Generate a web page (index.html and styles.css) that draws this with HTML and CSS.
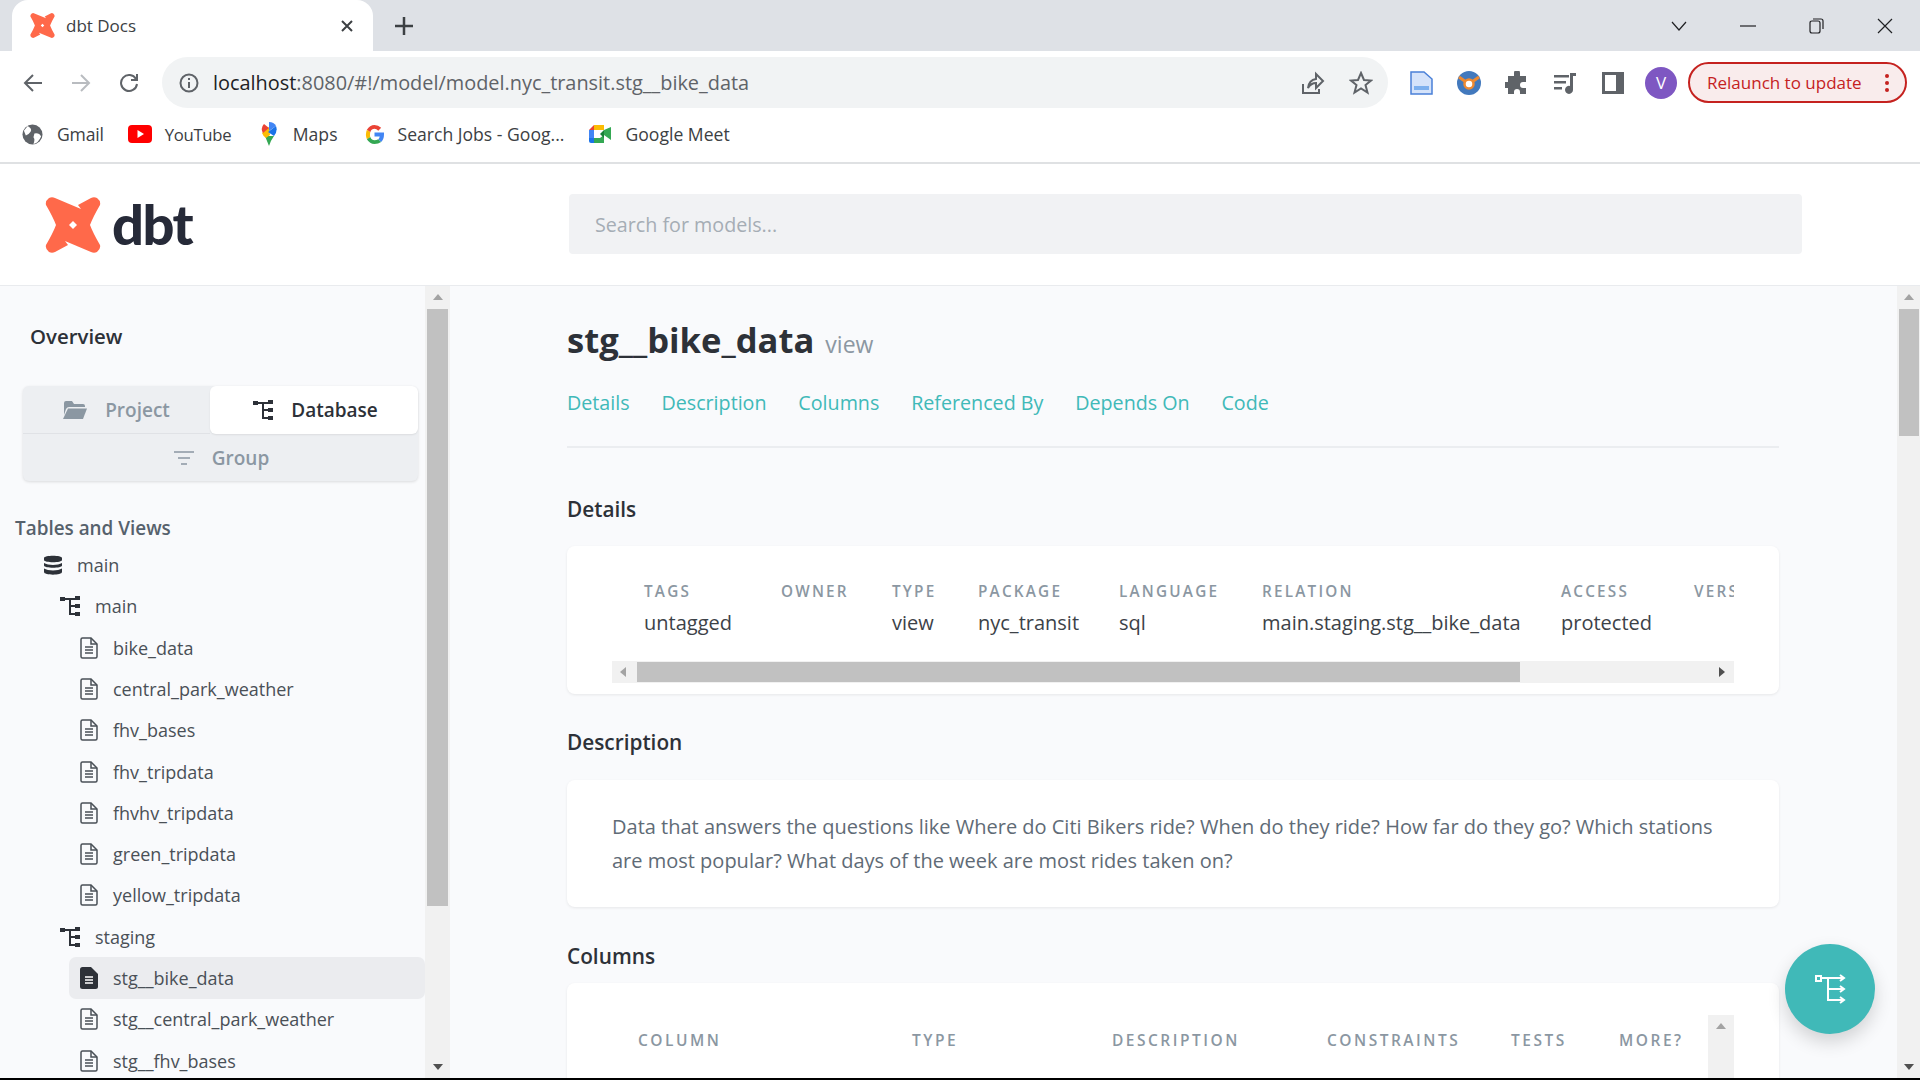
FILE: index.html
```html
<!DOCTYPE html>
<html lang="en">
<head>
    <meta charset="UTF-8">
    <title>dbt Docs</title>
    <link rel="stylesheet" href="styles.css">
</head>
<body>
    <svg class="defs" width="0" height="0">
        <symbol id="dbt-mark" viewBox="0 0 56 56">
            <path fill="#ff694a" fill-rule="evenodd" d="M4 1Q7-.5 10 1L36 12 33 8 46 1Q49-.5 52 1 56 4 55 8 48 20 45 28 48 36 55 48 56 52 52 55 49 56.500 46 55L20 44 23 48 10 55Q7 56.500 4 55 0 52 1 48 8 36 11 28 8 20 1 8 0 4 4 1ZM28 24L24 28 28 32 32 28Z"/>
        </symbol>
        <symbol id="file" viewBox="0 0 18 22">
            <path fill="none" stroke="currentColor" stroke-width="1.500" d="M1 2.500Q1 1 2.500 1H11L17 7V19.500Q17 21 15.500 21H2.500Q1 21 1 19.500Z"/>
            <path fill="none" stroke="currentColor" stroke-width="1.500" d="M11 1V7H17M5 10H13M5 13H13M5 16H13"/>
        </symbol>
        <symbol id="file-solid" viewBox="0 0 18 22">
            <path fill="currentColor" d="M0 2.500Q0 0 2.500 0H11L18 7V19.500Q18 22 15.500 22H2.500Q0 22 0 19.500Z"/>
            <path fill="none" stroke="#fff" stroke-width="1.500" d="M5 10H13M5 13H13M5 16H13"/>
        </symbol>
        <symbol id="tree" viewBox="0 0 20 20">
            <path fill="currentColor" d="M0 1H5V5H0ZM15 0H20V4H15ZM15 8H20V12H15ZM15 16H20V20H15Z"/>
            <path fill="none" stroke="currentColor" stroke-width="2" d="M5 3H15M10 3V18H15M10 10H15"/>
        </symbol>
    </svg>

    <div class="tabstrip">
        <div class="tab">
            <svg class="favicon"><use href="#dbt-mark"/></svg>
            <span class="tab-title">dbt Docs</span>
            <svg class="tab-close" viewBox="0 0 12 12"><path d="M1 1L11 11M11 1L1 11"/></svg>
        </div>
        <svg class="tab-new" viewBox="0 0 18 18"><path d="M9 0V18M0 9H18"/></svg>
        <div class="winctl">
            <svg class="win-chevron" viewBox="0 0 16 10"><path d="M1 1L8 9 15 1"/></svg>
            <svg class="win-min" viewBox="0 0 16 16"><path d="M0 8H16"/></svg>
            <svg viewBox="0 0 16 16"><path d="M1 5Q1 3 3 3H9Q11 3 11 5V13Q11 15 9 15H3Q1 15 1 13ZM4 1H12Q14 1 14 3V11"/></svg>
            <svg viewBox="0 0 16 16"><path d="M1 1L15 15M15 1L1 15"/></svg>
        </div>
    </div>

    <div class="toolbar">
        <div class="nav">
            <svg viewBox="0 0 20 20"><path d="M19 10H2M10 2L2 10 10 18"/></svg>
            <svg class="nav-off" viewBox="0 0 20 20"><path d="M1 10H18M10 2L18 10 10 18"/></svg>
            <svg viewBox="0 0 20 20"><path d="M17 6A8 8 0 1 0 18 11M18 1V7H12"/></svg>
        </div>
        <div class="omnibox">
            <svg class="info" viewBox="0 0 20 20"><circle cx="10" cy="10" r="8.500"/><path d="M10 9V15M10 5V7"/></svg>
            <span class="url"><b>localhost</b>:8080/#!/model/model.nyc_transit.stg__bike_data</span>
            <svg class="omni-ico" viewBox="0 0 24 24"><path d="M2 13V22H18V18M7 17Q8 9 15 8V3L22 10 15 17V12Q10 12 7 17Z"/></svg>
            <svg class="omni-ico" viewBox="0 0 24 24"><path d="M12 2L15 9 22 9.500 16.500 14 18.500 21.500 12 17.500 5.500 21.500 7.500 14 2 9.500 9 9Z"/></svg>
        </div>
        <div class="exts">
            <svg viewBox="0 0 24 24"><path fill="#d5e3fa" stroke="#4a80d8" stroke-width="1.500" d="M2 1H15L23 8V23H2Z"/><path fill="#7db0ee" d="M5 15H20V19H5Z"/></svg>
            <svg viewBox="0 0 24 24"><ellipse cx="12" cy="12" rx="12" ry="12" fill="#4279bd"/><path fill="none" stroke="#ee8a32" stroke-width="3" d="M2 6L9 11M22 6L15 11"/><circle cx="12" cy="13" r="4.500" fill="#fff" stroke="#ee8a32" stroke-width="2.500"/></svg>
            <svg viewBox="0 0 24 24"><path fill="#5f6368" d="M9 2A3 3 0 0 1 15 2V5H21V11H18A3 3 0 0 0 18 17H21V23H15V21A3 3 0 0 0 9 21V23H3V17H1A3 3 0 0 1 1 11H3V5H9Z"/></svg>
            <svg viewBox="0 0 24 24"><path fill="#5f6368" d="M1 4H16V6.500H1ZM1 10H13V12.500H1ZM1 16H9V18.500H1ZM17 2H23V5H20V18.500A4 4 0 1 1 17 15Z"/></svg>
            <svg viewBox="0 0 24 24"><path fill="#5f6368" fill-rule="evenodd" d="M1 1H23V23H1ZM4 4V20H15V4Z"/></svg>
            <span class="avatar">V</span>
        </div>
        <div class="relaunch">
            <span>Relaunch to update</span>
            <svg viewBox="0 0 4 18"><circle cx="2" cy="2" r="2"/><circle cx="2" cy="9" r="2"/><circle cx="2" cy="16" r="2"/></svg>
        </div>
    </div>

    <div class="bookmarks">
        <div class="bm bm-gmail">
            <svg viewBox="0 0 22 22"><circle cx="11" cy="11" r="10.500" fill="#5f6368"/><path fill="#fff" d="M6 2Q11 5 9 8T4 12L2 7ZM13 10Q18 9 20 13 17 20 12 21 14 16 12 14Z"/></svg>
            <span>Gmail</span>
        </div>
        <div class="bm bm-yt">
            <svg viewBox="0 0 24 18"><rect width="24" height="18" rx="4" fill="#f00"/><path fill="#fff" d="M9.500 5L16 9 9.500 13Z"/></svg>
            <span>YouTube</span>
        </div>
        <div class="bm bm-maps">
            <svg viewBox="0 0 16 24"><path fill="#34a853" d="M4 14L8 24Q10 18 13 14Z"/><path fill="#fbbc04" d="M1 11L8 5 9 13 5 16Q2 14 1 11Z"/><path fill="#4285f4" d="M8 0Q13 0 15 4L8 9Z"/><path fill="#ea4335" d="M3 2L8 6 2 11Q-1 6 3 2Z"/><path fill="#1a73e8" d="M15 4Q17 9 13 14L7 10Z"/></svg>
            <span>Maps</span>
        </div>
        <div class="bm bm-g">
            <svg viewBox="0 0 20 20"><path fill="#ea4335" d="M2 5Q5 0 10 0 14 0 17 3L14 6Q12 4 10 4 7 4 5.500 7.500Z"/><path fill="#fbbc04" d="M2 5L5.500 7.500Q5 10 5.500 12.500L2 15Q0 10 2 5Z"/><path fill="#34a853" d="M2 15L5.500 12.500Q7 16 10 16 12 16 14 15L17 18Q14 20 10 20 5 20 2 15Z"/><path fill="#4285f4" d="M20 10Q20 15 17 18L14 15Q15 14 15.500 12H10V8H20Z"/></svg>
            <span>Search Jobs - Goog...</span>
        </div>
        <div class="bm bm-meet">
            <svg viewBox="0 0 22 20"><path fill="#ea4335" d="M0 6L5 1V6Z"/><path fill="#fbbc04" d="M5 1H15V6H5Z"/><path fill="#4285f4" d="M0 6H5V14H0Z"/><path fill="#1a73e8" d="M0 14H5V19H2Q0 19 0 17Z"/><path fill="#34a853" d="M5 14H11L15 11V19H5ZM15 6V11L22 16V3Z"/><path fill="#188038" d="M11 10L15 6V14Z"/></svg>
            <span>Google Meet</span>
        </div>
    </div>

    <div class="app">
        <header class="app-head">
            <div class="brand">
                <svg class="brand-mark"><use href="#dbt-mark"/></svg>
                <span class="brand-name">dbt</span>
            </div>
            <div class="search">Search for models...</div>
        </header>

        <div class="app-body">
            <aside class="sidebar">
                <div class="side-title">Overview</div>
                <div class="switch">
                    <div class="switch-btn sw-project">
                        <svg class="sw-folder" viewBox="0 0 24 18"><path fill="#8b97a2" d="M1 2Q1 0 3 0H9L11 3H20Q22 3 22 5V6H6Q4 6 3 8L1 14Z"/><path fill="#8b97a2" d="M5 7.500H24L20 18H0Z"/></svg>
                        <span>Project</span>
                    </div>
                    <div class="switch-btn sw-database is-on">
                        <svg class="sw-tree"><use href="#tree"/></svg>
                        <span>Database</span>
                    </div>
                    <div class="switch-btn sw-group">
                        <svg class="sw-filter" viewBox="0 0 20 14"><path d="M0 1H20M4 7H16M7 13H13"/></svg>
                        <span>Group</span>
                    </div>
                </div>
                <div class="side-sub">Tables and Views</div>
                <div class="tree">
                    <div class="row row-db">
                        <svg class="ico-db" viewBox="0 0 18 20"><path fill="#2d3138" d="M0 3C0 0 18 0 18 3V5C18 8 0 8 0 5ZM0 8C4 10.500 14 10.500 18 8V10.500C18 13.500 0 13.500 0 10.500ZM0 13.500C4 16 14 16 18 13.500V17C18 20.500 0 20.500 0 17Z"/></svg>
                        <span>main</span>
                    </div>
                    <div class="row row-schema"><svg class="ico-tree"><use href="#tree"/></svg><span>main</span></div>
                    <div class="row row-file"><svg class="ico-file"><use href="#file"/></svg><span>bike_data</span></div>
                    <div class="row row-file"><svg class="ico-file"><use href="#file"/></svg><span>central_park_weather</span></div>
                    <div class="row row-file"><svg class="ico-file"><use href="#file"/></svg><span>fhv_bases</span></div>
                    <div class="row row-file"><svg class="ico-file"><use href="#file"/></svg><span>fhv_tripdata</span></div>
                    <div class="row row-file"><svg class="ico-file"><use href="#file"/></svg><span>fhvhv_tripdata</span></div>
                    <div class="row row-file"><svg class="ico-file"><use href="#file"/></svg><span>green_tripdata</span></div>
                    <div class="row row-file"><svg class="ico-file"><use href="#file"/></svg><span>yellow_tripdata</span></div>
                    <div class="row row-schema"><svg class="ico-tree"><use href="#tree"/></svg><span>staging</span></div>
                    <div class="row row-file is-active"><svg class="ico-file"><use href="#file-solid"/></svg><span>stg__bike_data</span></div>
                    <div class="row row-file"><svg class="ico-file"><use href="#file"/></svg><span>stg__central_park_weather</span></div>
                    <div class="row row-file"><svg class="ico-file"><use href="#file"/></svg><span>stg__fhv_bases</span></div>
                </div>
            </aside>
            <div class="vbar vbar-side">
                <i class="arr arr-up"></i>
                <div class="thumb thumb-side"></div>
                <i class="arr arr-down"></i>
            </div>

            <main class="main">
                <div class="title-row">
                    <h1>stg__bike_data</h1>
                    <small>view</small>
                </div>
                <nav class="links">
                    <a>Details</a>
                    <a>Description</a>
                    <a>Columns</a>
                    <a>Referenced By</a>
                    <a>Depends On</a>
                    <a>Code</a>
                </nav>

                <h2 class="h-details">Details</h2>
                <section class="card card-details">
                    <div class="details-clip">
                        <div class="details-grid">
                            <div class="lbl">TAGS</div>
                            <div class="lbl">OWNER</div>
                            <div class="lbl">TYPE</div>
                            <div class="lbl">PACKAGE</div>
                            <div class="lbl">LANGUAGE</div>
                            <div class="lbl">RELATION</div>
                            <div class="lbl">ACCESS</div>
                            <div class="lbl">VERSION</div>
                            <div class="val">untagged</div>
                            <div class="val"></div>
                            <div class="val">view</div>
                            <div class="val">nyc_transit</div>
                            <div class="val">sql</div>
                            <div class="val">main.staging.stg__bike_data</div>
                            <div class="val">protected</div>
                            <div class="val"></div>
                        </div>
                    </div>
                    <div class="hbar">
                        <i class="arr arr-left"></i>
                        <div class="thumb thumb-h"></div>
                        <i class="arr arr-right"></i>
                    </div>
                </section>

                <h2 class="h-desc">Description</h2>
                <section class="card card-desc">
                    <p>Data that answers the questions like Where do Citi Bikers ride? When do they ride? How far do they go? Which stations are most popular? What days of the week are most rides taken on?</p>
                </section>

                <h2 class="h-cols">Columns</h2>
                <section class="card card-cols">
                    <div class="cols-grid">
                        <div class="lbl lbl-cols">COLUMN</div>
                        <div class="lbl lbl-cols">TYPE</div>
                        <div class="lbl lbl-cols">DESCRIPTION</div>
                        <div class="lbl lbl-cols">CONSTRAINTS</div>
                        <div class="lbl lbl-cols">TESTS</div>
                        <div class="lbl lbl-cols">MORE?</div>
                    </div>
                    <div class="vbar vbar-cols"><i class="arr arr-up"></i></div>
                </section>
            </main>
            <div class="vbar vbar-main">
                <i class="arr arr-up"></i>
                <div class="thumb thumb-main"></div>
                <i class="arr arr-down"></i>
            </div>
        </div>

        <button class="fab">
            <svg viewBox="0 0 32 32"><path d="M2 3H7V8H2ZM7 5H29M14 5V27H29M14 16H29M26 2L30 5 26 8M26 13L30 16 26 19M26 24L30 27 26 30"/></svg>
        </button>
    </div>
    <div class="edge"></div>
</body>
</html>
```

FILE: styles.css
```css
* {
    box-sizing: border-box;
}
html, body {
    height: 100%;
}
body {
    margin: 0;
    display: flex;
    flex-direction: column;
    overflow: hidden;
    font-family: "Open Sans", "Noto Sans", sans-serif;
    color: #2d3138;
    background: #fff;
}
.defs {
    position: absolute;
}

/* browser chrome */
.tabstrip {
    flex: none;
    height: 51px;
    display: flex;
    align-items: center;
    background: #dee1e6;
}
.tab {
    width: 361px;
    height: 51px;
    margin-left: 12px;
    padding: 0 20px 0 18px;
    display: flex;
    align-items: center;
    background: #fff;
    border-radius: 16px 16px 0 0;
}
.favicon {
    width: 25px;
    height: 25px;
}
.tab-title {
    margin-left: 11px;
    flex: 1;
    font-size: 17px;
    color: #3c4043;
}
.tab-close {
    width: 12px;
    height: 12px;
    fill: none;
    stroke: #3c4043;
    stroke-width: 2;
}
.tab-new {
    width: 18px;
    height: 18px;
    margin-left: 22px;
    fill: none;
    stroke: #3c4043;
    stroke-width: 2.500;
}
.winctl {
    margin-left: auto;
    padding-right: 27px;
    display: flex;
    align-items: center;
    gap: 52px;
}
.winctl svg {
    width: 16px;
    height: 16px;
    fill: none;
    stroke: #202124;
    stroke-width: 1.200;
}
.winctl .win-chevron {
    margin-right: 1px;
}
.winctl .win-min {
    margin-right: 1px;
}
.toolbar {
    flex: none;
    height: 57px;
    padding: 6px 12px 0 0;
    display: flex;
    align-items: flex-start;
}
.nav {
    width: 162px;
    height: 51px;
    padding-left: 23px;
    display: flex;
    align-items: center;
    gap: 28px;
}
.nav svg {
    width: 20px;
    height: 20px;
    fill: none;
    stroke: #5f6368;
    stroke-width: 2;
}
.nav .nav-off {
    stroke: #b9bcc0;
}
.omnibox {
    width: 1226px;
    height: 51px;
    padding: 0 15px 0 17px;
    display: flex;
    align-items: center;
    background: #f1f3f4;
    border-radius: 26px;
}
.info {
    width: 20px;
    height: 20px;
    fill: none;
    stroke: #5f6368;
    stroke-width: 2;
}
.url {
    margin-left: 14px;
    flex: 1;
    font-size: 19.9px;
    color: #5f6368;
}
.url b {
    font-weight: 400;
    color: #202124;
}
.omni-ico {
    width: 24px;
    height: 24px;
    margin-left: 24px;
    fill: none;
    stroke: #5f6368;
    stroke-width: 2;
}
.exts {
    width: 300px;
    height: 51px;
    padding-left: 21px;
    display: flex;
    align-items: center;
    gap: 24px;
}
.exts svg {
    width: 24px;
    height: 24px;
    flex: none;
}
.avatar {
    width: 32px;
    height: 32px;
    margin-left: -4px;
    flex: none;
    display: flex;
    align-items: center;
    justify-content: center;
    font-size: 17px;
    color: #fff;
    background: #7e57c2;
    border-radius: 50%;
}
.relaunch {
    width: 219px;
    height: 41px;
    margin-top: 5px;
    padding: 0 16px 0 17px;
    display: flex;
    align-items: center;
    justify-content: space-between;
    font-size: 17px;
    color: #c5221f;
    background: #f9ecec;
    border: 2px solid #c5221f;
    border-radius: 21px;
    flex: none;
}
.relaunch svg {
    width: 4px;
    height: 18px;
    fill: #c5221f;
}
.bookmarks {
    flex: none;
    height: 56px;
    padding-bottom: 2px;
    display: flex;
    align-items: center;
    border-bottom: 2px solid #dfe1e3;
    font-size: 17.600px;
    color: #3c4043;
}
.bm {
    display: flex;
    align-items: center;
    gap: 14px;
}
.bm-gmail { margin-left: 22px; }
.bm-gmail span { letter-spacing: -0.2px; }
.bm-gmail svg { width: 21px; height: 21px; }
.bm-yt { margin-left: 24px; gap: 13px; }
.bm-yt svg { width: 24px; height: 18px; }
.bm-yt span { font-size: 16.700px; letter-spacing: -0.3px; }
.bm-maps { margin-left: 29.500px; gap: 16px; }
.bm-maps svg { width: 16px; height: 24px; }
.bm-g { margin-left: 27px; }
.bm-g svg { width: 19px; height: 19px; }
.bm-meet { margin-left: 25px; }
.bm-meet svg { width: 22px; height: 20px; }

/* dbt header */
.app {
    flex: 1;
    min-height: 0;
    position: relative;
    display: flex;
    flex-direction: column;
}
.app-head {
    flex: none;
    height: 122px;
    display: flex;
    align-items: center;
    border-bottom: 1px solid #e9ebee;
}
.brand {
    width: 569px;
    padding-left: 45px;
    display: flex;
    align-items: center;
}
.brand-mark {
    width: 56px;
    height: 56px;
}
.brand-name {
    margin: -2px 0 0 11px;
    font-family: "Lato", sans-serif;
    font-weight: 900;
    font-size: 56px;
    line-height: 56px;
    letter-spacing: -1.500px;
    color: #262a38;
}
.search {
    width: 1233px;
    height: 60px;
    margin-top: -1px;
    padding-left: 26px;
    display: flex;
    align-items: center;
    font-size: 19.700px;
    color: #a5adb5;
    background: #f1f2f4;
    border-radius: 4px;
}
.app-body {
    flex: 1;
    min-height: 0;
    display: flex;
    background: #f9fafc;
}

/* sidebar */
.sidebar {
    width: 425px;
    flex: none;
    padding-top: 36px;
    overflow: hidden;
}
.side-title {
    margin-left: 30px;
    font-size: 20.400px;
    font-weight: 600;
    line-height: 28px;
    color: #2d3138;
}
.switch {
    width: 395px;
    margin: 36px 0 0 23px;
    display: grid;
    grid-template-columns: 187px 208px;
    grid-template-rows: 48px 47px;
    background: #edeff2;
    border-radius: 6px;
    box-shadow: 0 1px 3px rgba(0, 0, 0, 0.12);
    font-size: 19px;
    font-weight: 600;
    color: #8b97a2;
}
.switch-btn {
    display: flex;
    align-items: center;
    justify-content: center;
    gap: 18px;
}
.sw-project {
    border-bottom: 1px solid #e0e2e6;
}
.is-on {
    color: #2d3138;
    background: #fff;
    border-radius: 6px;
    box-shadow: 0 1px 2px rgba(0, 0, 0, 0.08);
}
.sw-group {
    grid-column: 1 / 3;
    padding-left: 2px;
}
.sw-folder {
    width: 24px;
    height: 18px;
}
.sw-tree {
    width: 20px;
    height: 20px;
    margin: 0 0 0 3px;
}
.sw-filter {
    width: 20px;
    height: 14px;
    fill: none;
    stroke: #8b97a2;
    stroke-width: 1.500;
}
.side-sub {
    margin: 33px 0 2.400px 15px;
    font-size: 18.900px;
    font-weight: 600;
    line-height: 28px;
    color: #56616c;
}
.row {
    height: 41.300px;
    display: flex;
    align-items: center;
    gap: 15px;
    font-size: 18px;
    color: #4a5057;
}
.row-db {
    padding-left: 44px;
}
.row-schema {
    padding-left: 60px;
}
.row-file {
    margin-left: 69px;
    padding-left: 11px;
    border-radius: 7px;
}
.is-active {
    background: #ebecef;
}
.ico-db {
    width: 18px;
    height: 20px;
}
.ico-tree {
    width: 20px;
    height: 20px;
    color: #2d3138;
}
.ico-file {
    width: 18px;
    height: 22px;
    color: #4a5057;
}
.is-active .ico-file {
    color: #2d3138;
}

/* scrollbars */
.vbar {
    flex: none;
    display: flex;
    flex-direction: column;
    align-items: center;
    background: #f1f1f1;
}
.vbar-side {
    width: 25px;
}
.vbar-main {
    width: 23px;
}
.thumb {
    background: #c1c1c1;
}
.thumb-side {
    width: 21px;
    height: 597px;
}
.thumb-main {
    width: 20px;
    height: 127px;
}
.arr {
    width: 0;
    height: 0;
    display: block;
    border: 5px solid transparent;
}
.arr-up {
    margin: 8px 0 9px;
    border-top-width: 0;
    border-bottom: 6px solid #a3a3a3;
}
.arr-down {
    margin: auto 0 8px;
    border-bottom-width: 0;
    border-top: 6px solid #505050;
}
.arr-left {
    margin-left: 8px;
    border-left-width: 0;
    border-right: 6px solid #a3a3a3;
}
.arr-right {
    margin: 0 9px 0 auto;
    border-right-width: 0;
    border-left: 6px solid #505050;
}

/* main column */
.main {
    flex: 1;
    min-width: 0;
    padding: 32px 118px 0 117px;
    overflow: hidden;
}
.title-row {
    height: 44px;
    display: flex;
    align-items: baseline;
    gap: 11px;
}
h1 {
    margin: 0;
    font-size: 34.600px;
    font-weight: 700;
    line-height: 44px;
    color: #2d3138;
}
.title-row small {
    font-size: 23px;
    color: #8b97a2;
}
.links {
    margin-top: 26px;
    padding-bottom: 28px;
    display: flex;
    gap: 31.800px;
    font-size: 19.700px;
    line-height: 30px;
    color: #40b9b8;
    border-bottom: 2px solid #ebedf0;
}
h2 {
    margin: 0;
    font-size: 20.800px;
    font-weight: 600;
    line-height: 28px;
    color: #2d3138;
}
.h-details {
    margin-top: 47px;
}
.h-desc {
    margin-top: 34px;
}
.h-cols {
    margin-top: 35px;
}
.card {
    background: #fff;
    border-radius: 8px;
    box-shadow: 0 1px 3px rgba(0, 0, 0, 0.08);
}
.card-details {
    height: 148px;
    margin-top: 23px;
    padding: 35px 45px 0 45px;
}
.details-clip {
    overflow: hidden;
}
.details-grid {
    width: 1300px;
    padding-left: 32px;
    display: grid;
    grid-template-columns: 137px 111px 86px 141px 143px 299px 133px 150px;
    row-gap: 7px;
}
.lbl {
    font-size: 15.300px;
    font-weight: 600;
    line-height: 20px;
    letter-spacing: 2.200px;
    color: #8b97a2;
    white-space: nowrap;
}
.lbl-cols {
    font-size: 15.500px;
    letter-spacing: 2.500px;
}
.val {
    min-height: 30px;
    font-size: 20px;
    line-height: 30px;
    color: #3c4248;
    white-space: nowrap;
}
.hbar {
    height: 22px;
    margin-top: 23px;
    display: flex;
    align-items: center;
    background: #f1f1f1;
}
.thumb-h {
    width: 883px;
    height: 20px;
    margin-left: 11px;
}
.card-desc {
    height: 127px;
    margin-top: 24px;
    padding: 30px 44px 0 45px;
}
.card-desc p {
    margin: 0;
    font-size: 20px;
    line-height: 34px;
    color: #5f6b76;
}
.card-cols {
    height: 120px;
    margin-top: 13px;
    padding: 32px 45px 0 45px;
    display: flex;
}
.cols-grid {
    flex: 1;
    padding: 15px 0 0 26px;
    display: grid;
    grid-template-columns: 274px 200px 215px 184px 108px 1fr;
    align-self: flex-start;
}
.vbar-cols {
    width: 26px;
    height: 100px;
}

/* floating button and bottom edge */
.fab {
    position: absolute;
    right: 45px;
    bottom: 44px;
    width: 90px;
    height: 90px;
    padding: 0;
    display: flex;
    align-items: center;
    justify-content: center;
    border: 0;
    border-radius: 50%;
    background: #40b9b8;
    box-shadow: 0 8px 18px rgba(0, 0, 0, 0.16);
}
.fab svg {
    width: 32px;
    height: 32px;
    fill: none;
    stroke: #fff;
    stroke-width: 2;
}
.edge {
    flex: none;
    height: 2px;
    background: #000;
}
```
